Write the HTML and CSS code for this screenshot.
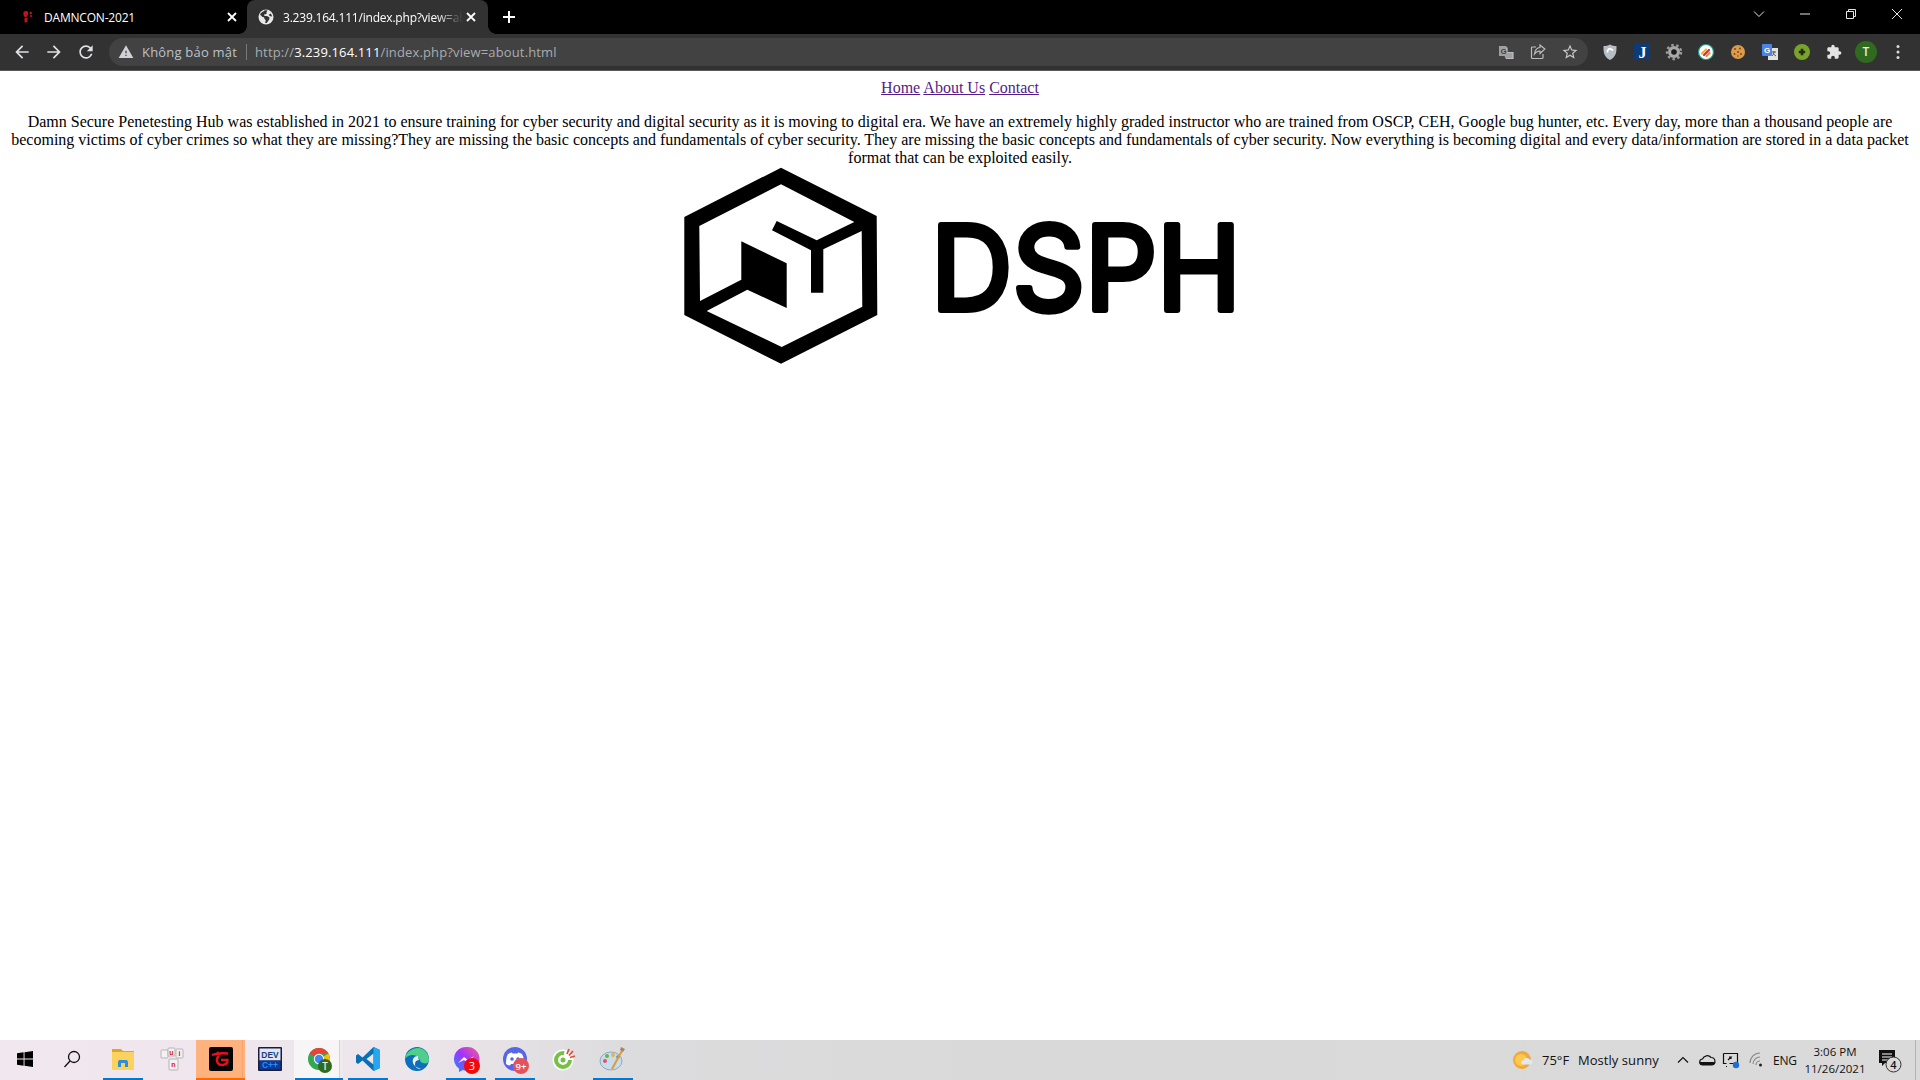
FILE: index.html
```html
<!DOCTYPE html>
<html lang="vi">
<head>
<meta charset="utf-8">
<title>DSPH</title>
<link rel="stylesheet" href="styles.css">
</head>
<body>
<div class="screen">
  <header class="tabstrip">
    <div class="tab tab-first">
      <svg class="ico16" viewBox="0 0 16 16"><path class="red" d="M4 2.500c1.600-1 4-.6 4.200 1.200.1 1.300-.4 3-1.200 3.800-1 .8-2.800.4-3.200-.8C3.400 5.500 3 3.200 4 2.500zM5 9c1-.3 2.300-.2 2.600.5.300 1-.1 3.500-1.300 4-1 .3-1.800-.4-1.800-1.500 0-1-.2-2.600.5-3z"/><circle class="red" cx="10.800" cy="4" r="1.200"/><circle class="red" cx="11" cy="7" r="1"/></svg>
      <span class="tab-title">DAMNCON-2021</span>
      <svg class="ico16" viewBox="0 0 16 16"><path class="x" d="M4 4l8 8M12 4l-8 8"/></svg>
    </div>
    <div class="tab tab-active">
      <svg class="ico16" viewBox="0 0 16 16"><circle class="globe" cx="8" cy="8" r="7.500"/><path class="land" d="M6.500 1.500C5 3 3 3.500 2 5.500l2.500 2.500 1.500.3.500 1.700 1.200 1-.5 3h1.500l2.500-3.500.3-2-2.500-1.500H6.500L6 5.500 8.500 5V3l1-1.300c-1-.4-2-.4-3-.2zM12.500 4.500l-1.500 1 .5 1.500 2.500.5c0-1-.6-2.200-1.500-3z"/></svg>
      <span class="tab-title tab-title-active tab-fade">3.239.164.111/index.php?view=about.html</span>
      <svg class="ico16" viewBox="0 0 16 16"><path class="x" d="M4 4l8 8M12 4l-8 8"/></svg>
    </div>
    <svg class="ico16 newtab" viewBox="0 0 16 16"><path class="x x-wide" d="M8 2v12M2 8h12"/></svg>
    <div class="winctrls">
      <div class="winbtn"><svg class="ico12" viewBox="0 0 12 12"><path class="wline" d="M1 3.500l5 5 5-5"/></svg></div>
      <div class="winbtn"><svg class="ico12" viewBox="0 0 12 12"><path class="wline" d="M1 6h10"/></svg></div>
      <div class="winbtn"><svg class="ico12" viewBox="0 0 12 12"><path class="wline" d="M1.500 3.500h7v7h-7zM3.500 3.500v-2h7v7h-2"/></svg></div>
      <div class="winbtn"><svg class="ico12" viewBox="0 0 12 12"><path class="wline" d="M1 1l10 10M11 1L1 11"/></svg></div>
    </div>
  </header>

  <div class="toolbar">
    <div class="navbtn"><svg class="ico20" viewBox="0 0 24 24"><path class="chromeicon" d="M20 11H7.800l5.600-5.600L12 4l-8 8 8 8 1.400-1.400L7.800 13H20z"/></svg></div>
    <div class="navbtn"><svg class="ico20" viewBox="0 0 24 24"><path class="chromeicon" d="M4 11h12.200l-5.600-5.600L12 4l8 8-8 8-1.400-1.400 5.600-5.600H4z"/></svg></div>
    <div class="navbtn"><svg class="ico20" viewBox="0 0 24 24"><path class="chromeicon" d="M17.650 6.350A7.958 7.958 0 0012 4c-4.420 0-7.990 3.580-7.990 8s3.570 8 7.990 8c3.730 0 6.840-2.550 7.730-6h-2.080A5.990 5.990 0 0112 18c-3.310 0-6-2.690-6-6s2.690-6 6-6c1.660 0 3.140.690 4.220 1.780L13 11h7V4l-2.350 2.350z"/></svg></div>
    <div class="omnibox">
      <svg class="ico16" viewBox="0 0 24 24"><path class="warn" fill-rule="evenodd" d="M1 21h22L12 2 1 21zm12-3h-2v-2h2v2zm0-4h-2v-4h2v4z"/></svg>
      <span class="secure">Không bảo mật</span>
      <span class="divider"></span>
      <span class="url">http://<span class="host">3.239.164.111</span>/index.php?view=about.html</span>
      <div class="omni-actions">
        <div class="navbtn"><svg class="ico16" viewBox="0 0 16 16"><path class="grayfill" d="M1 2h7l1 1.500v5L15 9v5.500H7.500L6.500 12H1z"/><path class="boxline" d="M9 3.500v5h6v6H8"/><text class="glyph-tr" x="2.500" y="9.500">G</text></svg></div>
        <div class="navbtn"><svg class="ico16" viewBox="0 0 16 16"><path class="boxline" d="M6 3H2.500A1 1 0 001.500 4v9.500a1 1 0 001 1H12a1 1 0 001-1V10M14.800 5L10 1v2.500C6.500 3.800 5 6 4.500 10c1.500-2 3-3 5.500-3v2.500z"/></svg></div>
        <div class="navbtn"><svg class="ico18" viewBox="0 0 24 24"><path class="chromeicon2" d="M22 9.240l-7.190-.620L12 2 9.190 8.630 2 9.240l5.460 4.730L5.820 21 12 17.270 18.180 21l-1.630-7.030L22 9.240zM12 15.400l-3.760 2.270 1-4.280-3.320-2.880 4.380-.380L12 6.100l1.710 4.040 4.380.380-3.320 2.880 1 4.280L12 15.400z"/></svg></div>
      </div>
    </div>
    <div class="extensions">
      <div class="navbtn"><svg class="ico16" viewBox="0 0 16 16"><path class="shield" d="M1.500 2C4 2 6 1.500 8 .5c2 1 4 1.500 6.500 1.500 0 6 0 10.500-6.500 14C1.500 12.500 1.500 8 1.500 2z"/><path class="shieldarc" d="M5.500 8.500C5 6 7 4.500 8.500 4.800c1.200.2 2 1 2.200 2"/></svg></div>
      <div class="navbtn"><svg class="ico16" viewBox="0 0 16 16"><rect class="jbg" width="16" height="16"/><text class="jtext" x="8.500" y="14">J</text></svg></div>
      <div class="navbtn"><svg class="ico16" viewBox="0 0 16 16"><circle class="gear" cx="8" cy="8" r="6"/><circle class="gearteeth" cx="8" cy="8" r="7"/><circle class="gearhub" cx="8" cy="8" r="2.800"/></svg></div>
      <div class="navbtn"><svg class="ico16" viewBox="0 0 16 16"><circle class="slackbg" cx="8" cy="8" r="7.500"/><path class="sl1" d="M4 9.500l4-4"/><path class="sl2" d="M6 11l5-5"/><path class="sl3" d="M8.500 12l3-3"/></svg></div>
      <div class="navbtn"><svg class="ico16" viewBox="0 0 16 16"><circle class="cookie" cx="8" cy="8" r="7"/><circle class="chip" cx="5" cy="5" r="1"/><circle class="chip" cx="10" cy="4.500" r="1"/><circle class="chip" cx="8" cy="8" r="1"/><circle class="chip" cx="4.500" cy="10" r="1"/><circle class="chip" cx="11" cy="10" r="1"/><circle class="chip" cx="8" cy="12" r=".8"/></svg></div>
      <div class="navbtn"><svg class="ico16" viewBox="0 0 16 16"><rect class="gtback" x="6" y="4" width="10" height="12"/><rect class="gtfront" x="0" y="0" width="10" height="12" rx="1"/><text class="gtg" x="2" y="9">G</text><path class="gtmark" d="M10 8h4M12 7v1c0 2-1 3-2 4M11 9c.5 1 1.500 2 3 3"/></svg></div>
      <div class="navbtn"><svg class="ico16" viewBox="0 0 16 16"><circle class="plusbg" cx="8" cy="8" r="8"/><circle class="plusin" cx="8" cy="8" r="5.500"/><path class="plus" d="M8 4.800v6.400M4.800 8h6.400"/></svg></div>
      <div class="navbtn"><svg class="ico16" viewBox="0 0 24 24"><path class="puzzle" d="M20.500 11H19V7c0-1.100-.9-2-2-2h-4V3.500C13 2.120 11.880 1 10.500 1S8 2.120 8 3.500V5H4c-1.100 0-1.990.9-1.990 2v3.800H3.500c1.490 0 2.700 1.210 2.700 2.700s-1.210 2.700-2.700 2.700H2V20c0 1.100.9 2 2 2h3.800v-1.500c0-1.490 1.210-2.700 2.700-2.700 1.490 0 2.700 1.210 2.700 2.700V22H17c1.100 0 2-.9 2-2v-4h1.500c1.380 0 2.500-1.120 2.500-2.500S21.880 11 20.500 11z"/></svg></div>
      <div class="navbtn"><span class="avatar">T</span></div>
      <div class="navbtn"><svg class="ico16" viewBox="0 0 16 16"><circle class="dot" cx="8" cy="2.500" r="1.500"/><circle class="dot" cx="8" cy="8" r="1.500"/><circle class="dot" cx="8" cy="13.500" r="1.500"/></svg></div>
    </div>
  </div>

  <main class="page">
    <nav class="site-nav"><a href="#home">Home</a> <a href="#about">About Us</a> <a href="#contact">Contact</a></nav>
    <p class="about">Damn Secure Penetesting Hub was established in 2021 to ensure training for cyber security and digital security as it is moving to digital era. We have an extremely highly graded instructor who are trained from OSCP, CEH, Google bug hunter, etc. Every day, more than a thousand people are becoming victims of cyber crimes so what they are missing?They are missing the basic concepts and fundamentals of cyber security. They are missing the basic concepts and fundamentals of cyber security. Now everything is becoming digital and every data/information are stored in a data packet format that can be exploited easily.</p>
    <svg class="logo" viewBox="684 166 553 197">
      <path fill-rule="evenodd" d="M781 166.700L876.700 215 877.300 314 781 362.700 684.300 314V216zM781 183.300L854.300 221 816.700 239.300 776.700 220 772 229.300 811 249.300V291.700H823.300V248.300L861.700 230 862.300 305.700 781.700 346 706.700 310 747.300 288.700 786.700 307V262.300L741.300 240.300V278.700L700 300 699.300 225z"/>
      <text class="logo-word" x="931" y="308.500" textLength="310" lengthAdjust="spacingAndGlyphs">DSPH</text>
    </svg>
  </main>

  <footer class="taskbar">
    <div class="tb"><svg class="ico16" viewBox="0 0 16 16"><path class="win" d="M0 2.300L6.600 1.300V7.500H0zM7.500 1.200L16 0V7.500H7.500zM0 8.500H6.600V14.700L0 13.700zM7.500 8.500H16V16L7.500 14.800z"/></svg></div>
    <div class="tb"><svg class="ico18 search-ico" viewBox="0 0 18 18"><circle class="searchc" cx="11" cy="7" r="5.500"/><path class="searchc" d="M7 11l-5.500 6"/></svg></div>
    <div class="tb run"><svg class="ico24" viewBox="0 0 24 24"><path class="f1" d="M1 2h9l2 2h11v18H1z"/><path class="f2" d="M1 5h22v17a1 1 0 01-1 1H2a1 1 0 01-1-1z"/><path class="f3" d="M7 20v-5l1-2h8l1 2v5h-3v-4h-4v4z"/></svg></div>
    <div class="tb"><svg class="ico24" viewBox="0 0 24 24"><rect class="key" x="1" y="3" width="7" height="8" rx="1"/><rect class="key" x="8" y="1" width="7" height="8" rx="1"/><rect class="key" x="16" y="2" width="7" height="9" rx="1"/><rect class="key" x="9" y="12" width="9" height="11" rx="1"/><text class="keyt" x="11.500" y="7.500">u</text><text class="keyt" x="19.500" y="8.500">i</text><text class="keyt" x="13.500" y="20">n</text></svg></div>
    <div class="tb garena"><svg class="ico24" viewBox="0 0 24 24"><rect class="gbg" width="24" height="24" rx="2"/><path class="gred" d="M3 8c5-2 10-2 16-1.500M8 5l3 3M10 9c-4 3-2 9 3 9 3 0 6-1.500 5.500-5H12"/></svg></div>
    <div class="tb"><svg class="ico24" viewBox="0 0 24 24"><rect class="devbg" width="24" height="24" rx="1"/><rect class="devtop" x="1.500" y="1.500" width="21" height="12"/><rect class="devbot" x="1.500" y="13.500" width="21" height="9"/><text class="devt" x="12" y="11">DEV</text><text class="devc" x="12" y="21">C++</text></svg></div>
    <div class="tb run chrome-btn"><svg class="ico26" viewBox="-2 -2 26 26"><circle class="cg" cx="11" cy="11" r="11"/><path class="cr" d="M1.500 5.500A11 11 0 0120.500 5.500H11a5.500 5.500 0 00-4.800 2.800z"/><path class="cy" d="M20.500 5.500A11 11 0 0111 22l4.800-8.200a5.500 5.500 0 000-5.500z"/><circle class="cw" cx="11" cy="11" r="5.200"/><circle class="cb" cx="11" cy="11" r="4.200"/><circle class="tbadge" cx="17" cy="18" r="7"/><text class="tbt" x="17" y="22">T</text></svg></div>
    <div class="tb run"><svg class="ico24" viewBox="0 0 24 24"><path class="vs1" d="M17.500 0L24 3v18l-6.500 3-11-10.500L2 17 0 15.500v-7L2 7l4.500 3.500zM17.500 6.500L10.500 12l7 5.500z"/><path class="vs2" d="M17.500 0L24 3v18l-6.500 3z"/></svg></div>
    <div class="tb"><svg class="ico24" viewBox="0 0 24 24"><circle class="e1" cx="12" cy="12" r="12"/><path class="e2" d="M0 12C1 5 7 1 13 1c6 0 11 5 11 12 0 3-3 4-6 3-3-.5-3-4-5-6C10 7 3 7 0 12z"/><path class="e3" d="M13 9c-4 0-6 3-5 7 1 3 5 6 9 5-5 2-7-1-7-4 0-3 2-4 4-4-1-2-1-4-1-4z"/></svg></div>
    <div class="tb run"><svg class="ico26" viewBox="-1 -1 26 26"><defs><linearGradient id="msg" x1="0" y1="1" x2="1" y2="0"><stop offset="0" stop-color="#1e90ff"/><stop offset=".5" stop-color="#a033ff"/><stop offset="1" stop-color="#ff5c87"/></linearGradient></defs><path fill="url(#msg)" d="M12 0a12 12 0 00-7 21.800V25l4-2A12 12 0 1012 0z"/><path class="mw" d="M4 16l6-6 4 3 6-4-6 7-4-3z"/><circle class="badge" cx="18" cy="19" r="8"/><text class="badget" x="18" y="23">3</text></svg></div>
    <div class="tb run"><svg class="ico26" viewBox="-1 -1 26 26"><circle class="disc" cx="12" cy="12" r="12"/><path class="mw" d="M5 7c2-1 3-1.500 4-1.500l.5 1h5l.5-1c1 0 2 .5 4 1.500 2 3.500 2 7 2 10-1.500 1-3 1.500-4 1.500l-1-1.500H8l-1 1.500c-1 0-2.500-.5-4-1.500 0-3 0-6.500 2-10z"/><circle class="disc" cx="9" cy="12" r="1.800"/><circle class="disc" cx="15" cy="12" r="1.800"/><circle class="badge2" cx="18" cy="19" r="8"/><text class="badget2" x="18" y="22.500">9+</text></svg></div>
    <div class="tb"><svg class="ico24" viewBox="0 0 24 24"><circle class="coc0" cx="11" cy="13" r="10.500"/><circle class="coc1" cx="11" cy="13" r="7"/><circle class="coc2" cx="11" cy="13" r="2.500"/><path class="coc3" d="M17 2l-2 5M21 4l-4 4.500M23 9l-5 1.500"/></svg></div>
    <div class="tb run"><svg class="ico26" viewBox="0 0 26 26"><ellipse class="pal" cx="11" cy="15" rx="11" ry="9"/><circle class="p1" cx="5" cy="15" r="2"/><circle class="p2" cx="7" cy="10" r="2"/><circle class="p3" cx="13" cy="9" r="2"/><circle class="p4" cx="18" cy="11" r="1.800"/><path class="brush" d="M23 3L12 23"/><path class="bhead" d="M21 1l4 2-2 3-3-2z"/></svg></div>

    <div class="tray">
      <svg class="ico20 tray-weather" viewBox="0 0 20 20"><circle class="sun" cx="9" cy="10" r="9"/><circle class="sunin" cx="8" cy="10" r="6"/><path class="wcloud" d="M10 14.500a2 2 0 01.3-4A3.500 3.500 0 0116.500 9.500a2.500 2.500 0 013 2.500 2.500 2.500 0 01-2.500 2.500z"/></svg>
      <span class="tray-text temp">75°F</span>
      <span class="tray-text sunny">Mostly sunny</span>
      <div class="trayico caret-box"><svg class="ico12" viewBox="0 0 12 12"><path class="tline" d="M1 8.500l5-5 5 5"/></svg></div>
      <div class="trayico"><svg class="ico18" viewBox="0 0 18 18"><path class="tline" d="M5 14a3 3 0 01-.5-6A5 5 0 0113 6.500a3.800 3.800 0 011 7.500z"/><path class="tfill" d="M1.500 11h15a3 3 0 01-3 3h-9a3 3 0 01-3-3z"/></svg></div>
      <div class="trayico"><svg class="ico18" viewBox="0 0 18 18"><path class="tline" d="M1.500 2.500h14v10h-8M5 15.500h-1"/><path class="tline" d="M1.500 2.500v10h3"/><path class="tline" d="M6 9l3-3h-2M9 6v2"/><circle class="tdot" cx="14" cy="14" r="3.200"/></svg></div>
      <div class="trayico wifi-box"><svg class="ico16" viewBox="0 0 16 16"><path class="wifi" d="M1 11a10 10 0 0110-10M4 12a7 7 0 017-7M7 13a4 4 0 014-4"/><circle class="wifid" cx="11.500" cy="13" r="1.500"/></svg></div>
      <span class="tray-text eng">ENG</span>
      <div class="clock"><span>3:06 PM</span><span>11/26/2021</span></div>
      <div class="notif"><svg class="ico26" viewBox="0 0 26 26"><path class="nb" d="M2 3h16v13H8l-3 3v-3H2z"/><path class="nl" d="M5 7h10M5 10h10M5 13h7"/><circle class="nc" cx="16.500" cy="17.500" r="7.500"/><text class="nt" x="16.500" y="21.500">4</text></svg></div>
      <span class="show-desktop"></span>
    </div>
  </footer>
</div>
</body>
</html>
```
FILE: styles.css
```css
html, body { margin: 0; padding: 0; height: 100%; overflow: hidden; }
svg { display: block; flex: none; overflow: visible; }
.screen { display: flex; flex-direction: column; height: 1080px; font-family: "Open Sans", "Noto Sans", sans-serif; }

.ico12 { width: 12px; height: 12px; }
.ico16 { width: 16px; height: 16px; }
.ico18 { width: 18px; height: 18px; }
.ico20 { width: 20px; height: 20px; }
.ico24 { width: 24px; height: 24px; }
.ico26 { width: 26px; height: 26px; }

/* tab strip */
.tabstrip { height: 34px; flex: none; background: #000; display: flex; align-items: stretch; }
.tab { display: flex; align-items: center; width: 241px; box-sizing: border-box; color: #fff; font-size: 12px; position: relative; }
.tab-first { margin-left: 6px; padding: 0 7px 0 14px; }
.tab-active { padding: 0 9px 0 11px; background: #323232; border-radius: 8px 8px 0 0; }
.tab-active::before, .tab-active::after { content: ""; position: absolute; bottom: 0; width: 8px; height: 8px; }
.tab-active::before { left: -8px; background: radial-gradient(circle at 0 0, #000 7.5px, #323232 8px); }
.tab-active::after { right: -8px; background: radial-gradient(circle at 100% 0, #000 7.5px, #323232 8px); }
.tab-title { flex: 1; min-width: 0; margin-left: 8px; white-space: nowrap; overflow: hidden; font-size: 12px; letter-spacing: -.2px; }
.tab-title-active { margin-left: 9px; }
.tab-fade { -webkit-mask-image: linear-gradient(90deg, #000 85%, transparent 100%); mask-image: linear-gradient(90deg, #000 85%, transparent 100%); }
.red { fill: #c0141c; }
.x { stroke: #fff; stroke-width: 1.800; fill: none; }
.x-wide { stroke-width: 2; }
.globe { fill: #e8e8e8; }
.land { fill: #323232; }
.newtab { align-self: center; margin-left: 13px; }
.winctrls { margin-left: auto; display: flex; height: 28px; }
.winbtn { width: 46px; display: flex; align-items: center; justify-content: center; }
.wline { stroke: #e6e6e6; stroke-width: 1; fill: none; }

/* toolbar */
.toolbar { height: 36px; flex: none; background: #323232; border-bottom: 1px solid #5a5a5a; display: flex; align-items: center; padding-left: 6px; }
.navbtn { width: 32px; height: 28px; flex: none; display: flex; align-items: center; justify-content: center; }
.chromeicon { fill: #dfe1e5; }
.chromeicon2 { fill: #c4c7c5; }
.omnibox { width: 1479px; box-sizing: border-box; height: 28px; margin-left: 7px; padding: 0 2px 0 9px; border-radius: 14px; background: #424242; display: flex; align-items: center; font-size: 13px; color: #bdc1c6; }
.warn { fill: #cfd1d4; }
.secure { margin-left: 8px; width: 96px; white-space: nowrap; letter-spacing: .2px; }
.divider { width: 1px; height: 16px; background: #7a7a7a; margin-left: 8px; }
.url { margin-left: 8px; white-space: nowrap; letter-spacing: .14px; color: #a8acb1; }
.host { color: #fff; }
.omni-actions { margin-left: auto; display: flex; }
.grayfill { fill: #a0a0a0; }
.boxline { fill: none; stroke: #bdbdbd; stroke-width: 1.200; }
.glyph-tr { font: bold 8px "Liberation Sans", sans-serif; fill: #424242; }
.extensions { margin-left: 6px; display: flex; padding-right: 6px; }
.shield { fill: #b8bcc4; }
.shieldarc { fill: none; stroke: #fff; stroke-width: 1.800; }
.jbg { fill: #0b3b78; }
.jtext { font: bold 16px "Liberation Serif", serif; fill: #fff; text-anchor: middle; }
.gear { fill: #a8a8a8; }
.gearteeth { fill: none; stroke: #9a9a9a; stroke-width: 2.400; stroke-dasharray: 2.500 2.500; }
.gearhub { fill: #1c1c1c; }
.slackbg { fill: #fff; stroke: #1f9e85; stroke-width: 1.200; }
.sl1, .sl2, .sl3 { stroke-width: 2.200; stroke-linecap: round; fill: none; }
.sl1 { stroke: #f0b429; }
.sl2 { stroke: #e01e5a; }
.sl3 { stroke: #f58a2e; }
.cookie { fill: #dc9a4a; }
.chip { fill: #7a4a1c; }
.gtback { fill: #e2e2e2; }
.gtfront { fill: #4a86e8; }
.gtg { font: bold 8px "Liberation Sans", sans-serif; fill: #fff; }
.gtmark { fill: none; stroke: #555; stroke-width: 1; }
.plusbg { fill: #7aa32c; }
.plusin { fill: #7aa32c; }
.plus { stroke: #1f2a10; stroke-width: 2.600; }
.puzzle { fill: #e4e4e4; }
.avatar { width: 22px; height: 22px; border-radius: 50%; background: #2f6a1f; color: #e6efe2; font: 600 12px/22px "Open Sans", sans-serif; text-align: center; }
.dot { fill: #dcdcdc; }

/* page */
.page { flex: 1; min-height: 0; background: #fff; padding: 8px; font-family: "Liberation Serif", "Times New Roman", serif; font-size: 16px; color: #000; text-align: center; }
.site-nav a { color: #551a8b; }
.about { margin: 16px 0 0; }
.logo { width: 553px; height: 197px; margin: 0 auto; }
.logo-word { font-family: Inter, "Open Sans", sans-serif; font-weight: 400; font-size: 117px; stroke: #000; stroke-width: 6; stroke-linejoin: round; }

/* taskbar */
.taskbar { height: 40px; flex: none; display: flex; align-items: stretch; background: linear-gradient(90deg, #f1e8ef 0, #ece5ea 420px, #dcdcde 620px, #d9d9d9 1000px, #dadada 100%); color: #111; }
.tb { width: 49px; flex: none; display: flex; align-items: center; justify-content: center; box-sizing: border-box; padding-bottom: 2px; }
.search-ico { margin-right: 3px; }
.run { background: linear-gradient(#0078d4, #0078d4) center bottom / 40px 2px no-repeat; }
.garena { background: linear-gradient(#ff6a00, #ff6a00) center bottom / 100% 2px no-repeat, linear-gradient(90deg, #ffb27e 0 46px, #f5a36c 46px 47px, #ffb27e 47px); }
.chrome-btn { background: linear-gradient(#0078d4, #0078d4) center bottom / 48px 2px no-repeat, linear-gradient(90deg, #f8f5f7 0 45px, #d5d3d5 45px 46px, #efeaee 46px); }
.win { fill: #000; }
.searchc { fill: none; stroke: #111; stroke-width: 1.300; }
.f1 { fill: #e0a526; }
.f2 { fill: #fbd25e; }
.f3 { fill: #2c8fd8; }
.key { fill: #f2f2f2; stroke: #b5b5b5; stroke-width: 1; }
.keyt { font: bold 7px "Liberation Sans", sans-serif; fill: #d02020; text-anchor: middle; }
.gbg { fill: #050505; }
.gred { fill: none; stroke: #e5121e; stroke-width: 2.400; }
.devbg { fill: #1c1c3a; }
.devtop { fill: #dfe6f5; }
.devbot { fill: #0a3a9a; }
.devt { font: bold 8.500px "Liberation Sans", sans-serif; fill: #1f3c7a; text-anchor: middle; }
.devc { font: bold 8.500px "Liberation Sans", sans-serif; fill: #2f8bf0; text-anchor: middle; }
.cg { fill: #34a853; }
.cr { fill: #ea4335; }
.cy { fill: #fbbc04; }
.cw { fill: #fff; }
.cb { fill: #4285f4; }
.tbadge { fill: #2f6a1f; }
.tbt { font: 600 10px "Open Sans", sans-serif; fill: #e6efe2; text-anchor: middle; }
.vs1 { fill: #0a6fb5; }
.vs2 { fill: #24a7ee; }
.e1 { fill: #0c6ebd; }
.e2 { fill: #4fd08a; }
.e3 { fill: #e9f4ee; }
.mw { fill: #fff; }
.badge { fill: #f00a0a; }
.badget { font: 11px "Open Sans", sans-serif; fill: #fff; text-anchor: middle; }
.disc { fill: #5566e8; }
.badge2 { fill: #e5525a; }
.badget2 { font: 600 9.500px "Open Sans", sans-serif; fill: #fff; text-anchor: middle; }
.coc0 { fill: #fff; }
.coc1 { fill: none; stroke: #76c043; stroke-width: 4; stroke-dasharray: 34 10; }
.coc2 { fill: #76c043; }
.coc3 { fill: none; stroke: #d8503a; stroke-width: 1.800; }
.pal { fill: #c7dcec; stroke: #8fa9bd; stroke-width: 1; }
.p1 { fill: #e0555a; }
.p2 { fill: #69b14f; }
.p3 { fill: #eeb23c; }
.p4 { fill: #4d88d8; }
.brush { stroke: #e09a3a; stroke-width: 2; }
.bhead { fill: #a98560; }

.tray { margin-left: auto; display: flex; align-items: center; font-size: 13px; }
.tray-text { white-space: nowrap; }
.tray-weather { margin-right: 9px; }
.sun { fill: #f2a93b; }
.sunin { fill: #fbc94e; }
.wcloud { fill: #dce9f8; }
.temp { width: 36px; }
.sunny { width: 82px; letter-spacing: .05px; }
.trayico { width: 24px; height: 24px; display: flex; align-items: center; justify-content: center; }
.caret-box { margin-left: 11px; }
.wifi-box { margin-left: 2px; }
.tline { fill: none; stroke: #111; stroke-width: 1.200; }
.tfill { fill: #111; }
.tdot { fill: #1e6fd0; }
.wifi { fill: none; stroke: #8a8a8a; stroke-width: 1.200; }
.wifid { fill: #222; }
.eng { width: 23px; margin-left: 4px; font-size: 12px; letter-spacing: -.2px; }
.clock { width: 62px; margin-left: 8px; display: flex; flex-direction: column; align-items: center; gap: 1px; font-size: 11.500px; line-height: 16px; }
.notif { width: 28px; margin-left: 10px; display: flex; justify-content: center; }
.nb { fill: #111; }
.nl { stroke: #fff; stroke-width: 1; }
.nc { fill: #d9d9d9; stroke: #333; stroke-width: 1; }
.nt { font: 600 11px "Open Sans", sans-serif; fill: #111; text-anchor: middle; }
.show-desktop { width: 1px; height: 100%; margin-left: 11px; margin-right: 4px; background: #b3b3b3; }
```
